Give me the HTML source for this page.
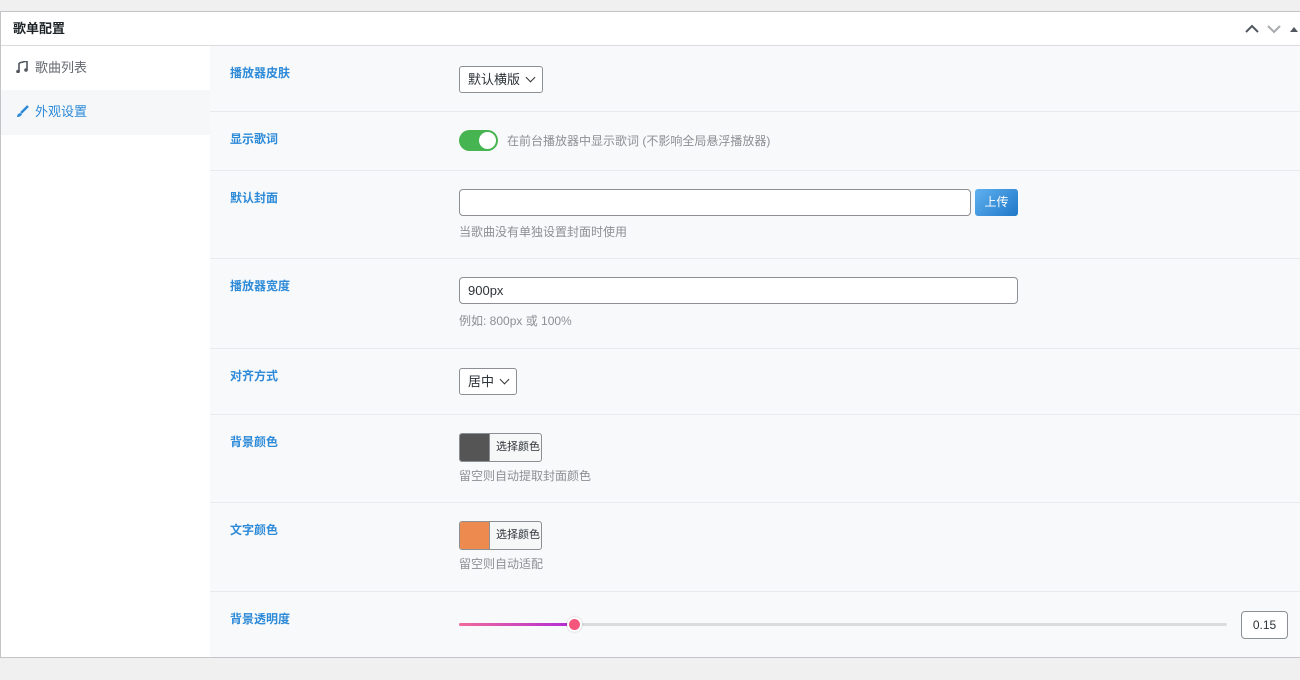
<!DOCTYPE html>
<html><head><meta charset="utf-8"><style>
*{box-sizing:border-box;margin:0;padding:0}
body{width:1300px;height:680px;background:#f0f0f1;font-family:"Liberation Sans","Noto Sans CJK SC",sans-serif;font-size:13px;color:#3c434a;position:relative;overflow:hidden}
.panel{position:absolute;left:0;top:11px;width:1310px;height:647px;background:#fff;border:1px solid #c3c4c7}
.hd{height:34px;border-bottom:1px solid #dcdcde;padding:0 12px;line-height:33px;font-weight:bold;font-size:13px;color:#1d2327}
.ctl{position:absolute;top:0;right:10px;height:33px;display:flex;align-items:center;gap:8px}
.side{position:absolute;left:0;top:34px;width:209px;bottom:0;background:#fff}
.tab{height:44px;padding-left:34px;line-height:44px;color:#646970;position:relative}
.tab.a{background:#f6f7f9;color:#2c8ad8;height:45px}
.tab svg{position:absolute;left:15px;top:15px}
.main{position:absolute;left:209px;top:34px;right:0;bottom:0;background:#f8f9fa}
.row{position:absolute;left:0;right:0;border-bottom:1px solid #e8eaed}
.lb{position:absolute;left:20px;font-weight:bold;color:#2c8ad8;font-size:12px}
.f{position:absolute;left:249px}
.sel{border:1px solid #8c8f94;border-radius:3px;background:#fff;height:27px;line-height:25px;padding:0 8px;font-size:13px;color:#2c3338;display:inline-block}
.sel:after{content:"";display:inline-block;width:6px;height:6px;border-right:1.5px solid #333;border-bottom:1.5px solid #333;transform:rotate(45deg);margin-left:7px;position:relative;top:-3px}
.inp{border:1px solid #8c8f94;border-radius:4px;background:#fff;height:27px;line-height:25px;padding:0 8px;color:#2c3338}
.hint{color:#8c8f94;font-size:12px}
.cp{display:flex;width:83px;height:29px;border:1px solid #8c8f94;border-radius:3px;overflow:hidden;background:#f6f7f7}
.cp i{width:29px;display:block}
.cp span{font-size:11px;line-height:27px;padding-left:6px;color:#2c3338;border-left:1px solid #8c8f94}
</style></head><body>
<div class="panel">
<div class="hd">歌单配置
<div class="ctl">
<svg width="14" height="10"><path d="M1 8 L7 2 L13 8" fill="none" stroke="#50575e" stroke-width="2"/></svg>
<svg width="14" height="10"><path d="M1 2 L7 8 L13 2" fill="none" stroke="#a7aaad" stroke-width="2"/></svg>
<svg width="10" height="10"><path d="M1 8 L5 3 L9 8Z" fill="#50575e"/></svg>
</div></div>
<div class="side">
<div class="tab"><svg width="12" height="12"><path d="M3 2 L11 0 L11 9 M3 2 L3 11" stroke="#50575e" stroke-width="1.6" fill="none"/><circle cx="2" cy="10.5" r="1.8" fill="#50575e"/><circle cx="10" cy="9" r="1.8" fill="#50575e"/></svg>歌曲列表</div>
<div class="tab a"><svg width="13" height="13"><path d="M12 1 L5 8" stroke="#2c8ad8" stroke-width="2.5"/><path d="M4 8 Q1 9 1 12 Q5 12 6 9Z" fill="#2c8ad8"/></svg>外观设置</div>
</div>
<div class="main">
<div class="row" style="top:0;height:66px"><div class="lb" style="top:18px">播放器皮肤</div><div class="f" style="top:20px"><span class="sel">默认横版</span></div></div>
<div class="row" style="top:66px;height:59px"><div class="lb" style="top:18px">显示歌词</div><div class="f" style="top:18px;display:flex;align-items:center;gap:9px"><div style="width:39px;height:21px;border-radius:11px;background:#46b450;position:relative"><div style="position:absolute;right:2px;top:2px;width:17px;height:17px;border-radius:50%;background:#fff"></div></div><span class="hint" style="font-size:12px;color:#8c8f94">在前台播放器中显示歌词 (不影响全局悬浮播放器)</span></div></div>
<div class="row" style="top:125px;height:88px"><div class="lb" style="top:18px">默认封面</div><div class="f" style="top:18px"><div style="display:flex;gap:4px"><div class="inp" style="width:512px"></div><div style="width:43px;height:27px;border-radius:3px;background:linear-gradient(135deg,#5fb0ee,#1f78c8);color:#fff;text-align:center;line-height:27px;font-size:12px">上传</div></div><div class="hint" style="margin-top:7px">当歌曲没有单独设置封面时使用</div></div></div>
<div class="row" style="top:213px;height:90px"><div class="lb" style="top:18px">播放器宽度</div><div class="f" style="top:18px"><div class="inp" style="width:559px">900px</div><div class="hint" style="margin-top:8px">例如: 800px 或 100%</div></div></div>
<div class="row" style="top:303px;height:66px"><div class="lb" style="top:18px">对齐方式</div><div class="f" style="top:19px"><span class="sel">居中</span></div></div>
<div class="row" style="top:369px;height:88px"><div class="lb" style="top:18px">背景颜色</div><div class="f" style="top:18px"><div class="cp"><i style="background:#555"></i><span>选择颜色</span></div><div class="hint" style="margin-top:5px">留空则自动提取封面颜色</div></div></div>
<div class="row" style="top:457px;height:89px"><div class="lb" style="top:18px">文字颜色</div><div class="f" style="top:18px"><div class="cp"><i style="background:#ec8a50"></i><span>选择颜色</span></div><div class="hint" style="margin-top:5px">留空则自动适配</div></div></div>
<div class="row" style="top:546px;height:66px;border:none"><div class="lb" style="top:18px">背景透明度</div>
<div style="position:absolute;left:249px;top:31px;width:768px;height:3px;background:#dcdcde;border-radius:2px"></div>
<div style="position:absolute;left:249px;top:31px;width:116px;height:3px;background:linear-gradient(90deg,#f06a9a,#b02ad8);border-radius:2px"></div>
<div style="position:absolute;left:357px;top:25px;width:15px;height:15px;border-radius:50%;background:#f5577c;border:2px solid #fff;box-shadow:0 0 2px rgba(0,0,0,.2)"></div>
<div style="position:absolute;left:1031px;top:19px;width:47px;height:28px;border:1px solid #8c8f94;border-radius:4px;background:#fff;text-align:center;line-height:26px;font-size:12px;color:#2c3338">0.15</div>
</div>
</div>
</div>
</body></html>
